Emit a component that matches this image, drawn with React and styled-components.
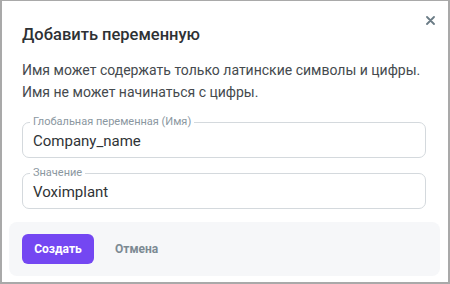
import React from "react";
import styled, { createGlobalStyle } from "styled-components";

const Global = createGlobalStyle`
  html, body { margin: 0; padding: 0; background: #fff; }
  body { font-family: Roboto, "Noto Sans", sans-serif; }
  * { box-sizing: border-box; }
`;

const Dialog = styled.div`
  width: 450px;
  height: 284px;
  background: #fff;
  border-style: solid;
  border-color: #a9a9a9;
  border-width: 1px 2px 2px 2px;
  position: relative;
  display: flex;
  flex-direction: column;
`;

const Close = styled.button`
  position: absolute;
  top: 12px;
  right: 11px;
  width: 14px;
  height: 14px;
  padding: 0;
  border: 0;
  background: transparent;
  display: flex;
  align-items: center;
  justify-content: center;
  cursor: pointer;
`;

const Body = styled.div`
  padding: 22px 22px 0 20px;
  display: flex;
  flex-direction: column;
`;

const Title = styled.h2`
  margin: 0;
  font-size: 16.5px;
  line-height: 24px;
  font-weight: 500;
  color: #2e3134;
`;

const Hint = styled.p`
  margin: 12px 0 0;
  font-size: 14px;
  line-height: 22px;
  color: #454a4e;
`;

const Fields = styled.div`
  margin-top: 14px;
  display: flex;
  flex-direction: column;
  gap: 10px;
`;

const Field = styled.fieldset`
  margin: 0;
  padding: 0 10px;
  border: 1px solid #d4d9dd;
  border-radius: 7px;
  min-width: 0;
`;

const Legend = styled.legend`
  padding: 0 3px;
  margin-left: -3px;
  font-size: 11px;
  line-height: 10px;
  color: #8b979f;
`;

const Value = styled.div`
  font-size: 15px;
  line-height: 20px;
  color: #2f3336;
  padding: 4px 0 6px;
`;

const Footer = styled.div`
  margin: 13px 8px 0 7px;
  height: 54px;
  background: #f6f7f9;
  border-radius: 8px;
  display: flex;
  align-items: center;
  padding: 0 13px;
  gap: 21px;
`;

const Primary = styled.button`
  height: 30px;
  width: 72px;
  border: 0;
  border-radius: 6px;
  background: #7447f2;
  color: #fff;
  font-family: inherit;
  font-size: 12px;
  font-weight: 700;
  cursor: pointer;
`;

const Ghost = styled.button`
  border: 0;
  background: transparent;
  color: #7c8a93;
  font-family: inherit;
  font-size: 12px;
  font-weight: 700;
  padding: 0;
  cursor: pointer;
`;

export default function App() {
  return (
    <>
      <Global />
      <Dialog>
        <Close aria-label="Закрыть">
          <svg width="9" height="9" viewBox="0 0 9 9">
            <path d="M1 1L8 8M8 1L1 8" stroke="#6b7c86" strokeWidth="1.8" strokeLinecap="round" />
          </svg>
        </Close>
        <Body>
          <Title>Добавить переменную</Title>
          <Hint>
            Имя может содержать только латинские символы и цифры.
            <br />
            Имя не может начинаться с цифры.
          </Hint>
          <Fields>
            <Field>
              <Legend>Глобальная переменная (Имя)</Legend>
              <Value>Company_name</Value>
            </Field>
            <Field>
              <Legend>Значение</Legend>
              <Value>Voximplant</Value>
            </Field>
          </Fields>
        </Body>
        <Footer>
          <Primary>Создать</Primary>
          <Ghost>Отмена</Ghost>
        </Footer>
      </Dialog>
    </>
  );
}
